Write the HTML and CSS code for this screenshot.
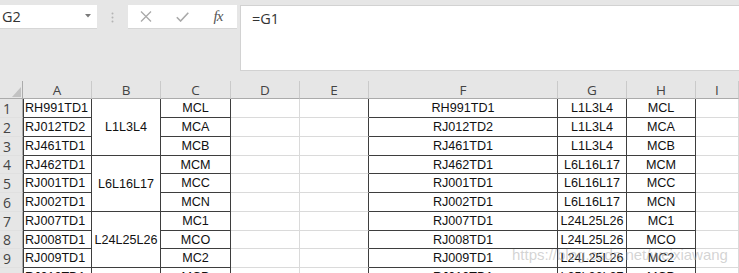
FILE: index.html
```html
<!DOCTYPE html>
<html lang="zh-CN">
  <head>
    <meta charset="UTF-8" />
    <title>Sheet1</title>
    <link rel="stylesheet" href="styles.css">
  </head>
  <body>
    <!-- 名称框 + 编辑栏 -->
    <div class="toolbar">
      <div class="namebox">
        <span>G2</span>
        <svg class="caret" width="6" height="4" viewBox="0 0 6 4"><path d="M0 0h6L3 3.5z" fill="#7a7a7a"/></svg>
      </div>
      <div class="grip">
        <svg width="3" height="11" viewBox="0 0 3 11"><circle cx="1.5" cy="1.5" r="1" fill="#b4b4b4"/><circle cx="1.5" cy="5.5" r="1" fill="#b4b4b4"/><circle cx="1.5" cy="9.5" r="1" fill="#b4b4b4"/></svg>
      </div>
      <div class="fnbtns">
        <span class="btn">
          <svg width="12" height="11" viewBox="0 0 12 11"><path d="M1 0.5L11 10.5M11 0.5L1 10.5" stroke="#a9a9a9" stroke-width="1.3" fill="none"/></svg>
        </span>
        <span class="btn">
          <svg width="13" height="10" viewBox="0 0 13 10"><path d="M0.8 5.2L4.6 9L12.3 0.8" stroke="#a9a9a9" stroke-width="1.6" fill="none"/></svg>
        </span>
        <span class="btn fx">fx</span>
      </div>
      <div class="formula">=G1</div>
    </div>

    <!-- 工作表 -->
    <div class="sheet">
      <div class="hd corner">
        <svg width="9" height="10" viewBox="0 0 9 10"><path d="M9 0V10H0z" fill="#c2c2c2"/></svg>
      </div>
      <div class="hd">A</div>
      <div class="hd">B</div>
      <div class="hd">C</div>
      <div class="hd">D</div>
      <div class="hd">E</div>
      <div class="hd">F</div>
      <div class="hd">G</div>
      <div class="hd">H</div>
      <div class="hd">I</div>

      <div class="rh">1</div>
      <div class="c k l first">RH991TD1</div>
      <div class="c k merge">L1L3L4</div>
      <div class="c k">MCL</div>
      <div class="c"></div>
      <div class="c er"></div>
      <div class="c k">RH991TD1</div>
      <div class="c k">L1L3L4</div>
      <div class="c k">MCL</div>
      <div class="c"></div>

      <div class="rh">2</div>
      <div class="c k l first">RJ012TD2</div>
      <div class="c k">MCA</div>
      <div class="c"></div>
      <div class="c er"></div>
      <div class="c k">RJ012TD2</div>
      <div class="c k">L1L3L4</div>
      <div class="c k">MCA</div>
      <div class="c"></div>

      <div class="rh">3</div>
      <div class="c k l first">RJ461TD1</div>
      <div class="c k">MCB</div>
      <div class="c"></div>
      <div class="c er"></div>
      <div class="c k">RJ461TD1</div>
      <div class="c k">L1L3L4</div>
      <div class="c k">MCB</div>
      <div class="c"></div>

      <div class="rh">4</div>
      <div class="c k l first">RJ462TD1</div>
      <div class="c k merge">L6L16L17</div>
      <div class="c k">MCM</div>
      <div class="c"></div>
      <div class="c er"></div>
      <div class="c k">RJ462TD1</div>
      <div class="c k">L6L16L17</div>
      <div class="c k">MCM</div>
      <div class="c"></div>

      <div class="rh">5</div>
      <div class="c k l first">RJ001TD1</div>
      <div class="c k">MCC</div>
      <div class="c"></div>
      <div class="c er"></div>
      <div class="c k">RJ001TD1</div>
      <div class="c k">L6L16L17</div>
      <div class="c k">MCC</div>
      <div class="c"></div>

      <div class="rh">6</div>
      <div class="c k l first">RJ002TD1</div>
      <div class="c k">MCN</div>
      <div class="c"></div>
      <div class="c er"></div>
      <div class="c k">RJ002TD1</div>
      <div class="c k">L6L16L17</div>
      <div class="c k">MCN</div>
      <div class="c"></div>

      <div class="rh">7</div>
      <div class="c k l first">RJ007TD1</div>
      <div class="c k merge">L24L25L26</div>
      <div class="c k">MC1</div>
      <div class="c"></div>
      <div class="c er"></div>
      <div class="c k">RJ007TD1</div>
      <div class="c k">L24L25L26</div>
      <div class="c k">MC1</div>
      <div class="c"></div>

      <div class="rh">8</div>
      <div class="c k l first">RJ008TD1</div>
      <div class="c k">MCO</div>
      <div class="c"></div>
      <div class="c er"></div>
      <div class="c k">RJ008TD1</div>
      <div class="c k">L24L25L26</div>
      <div class="c k">MCO</div>
      <div class="c"></div>

      <div class="rh">9</div>
      <div class="c k l first">RJ009TD1</div>
      <div class="c k">MC2</div>
      <div class="c"></div>
      <div class="c er"></div>
      <div class="c k">RJ009TD1</div>
      <div class="c k">L24L25L26</div>
      <div class="c k">MC2</div>
      <div class="c"></div>

      <div class="rh">10</div>
      <div class="c k l first">RJ010TD1</div>
      <div class="c k merge">L25L26L27</div>
      <div class="c k">MCP</div>
      <div class="c"></div>
      <div class="c er"></div>
      <div class="c k">RJ010TD1</div>
      <div class="c k">L25L26L27</div>
      <div class="c k">MCP</div>
      <div class="c"></div>
    </div>

    <span class="watermark">https://blog.csdn.net/weixiawang</span>
  </body>
</html>
```

FILE: styles.css
```css
* {
  box-sizing: border-box;
  margin: 0;
  padding: 0;
}
body {
  position: relative;
  width: 739px;
  height: 273px;
  overflow: hidden;
  background-color: #e6e6e6;
  font-family: "Liberation Sans", Arial, sans-serif;
}

/* 编辑栏 */
.toolbar {
  display: flex;
  align-items: flex-start;
  height: 81px;
  padding-top: 5px;
}
.namebox {
  display: flex;
  align-items: center;
  justify-content: space-between;
  width: 97px;
  height: 24px;
  padding: 0 6px 0 2px;
  background-color: #fff;
  border-bottom: 1px solid #d6d6d6;
  font: 14.5px "Open Sans", sans-serif;
  color: #333;
}
.caret {
  margin-top: -1px;
}
.grip {
  display: flex;
  justify-content: center;
  width: 31px;
  padding-top: 7px;
}
.fnbtns {
  display: flex;
  align-items: center;
  width: 109px;
  height: 24px;
  background-color: #fff;
  border-bottom: 1px solid #d6d6d6;
}
.btn {
  display: flex;
  justify-content: center;
  width: 36px;
}
.fx {
  font: italic 15px "Liberation Serif", serif;
  color: #555;
  letter-spacing: -1px;
}
.formula {
  flex: 1;
  height: 66px;
  margin-left: 3px;
  padding: 3px 0 0 11px;
  background-color: #fff;
  border: 1px solid #d2d2d2;
  border-right: none;
  font: 14.5px "Open Sans", sans-serif;
  color: #333;
}

/* 工作表 */
.sheet {
  display: grid;
  grid-template-columns: 23px 69px 69px 70px 69px 69px 189px 69px 69px 1fr;
  grid-template-rows: 18px 19px 19px 19px 18px 19px 19px 19px 18px 19px 19px 19px 19px;
}
.hd {
  display: flex;
  align-items: center;
  justify-content: center;
  background-color: #e6e6e6;
  border-right: 1px solid #cacaca;
  border-bottom: 1px solid #ababab;
  font: 13.5px "Open Sans", sans-serif;
  color: #444;
}
.corner {
  align-items: flex-end;
  justify-content: flex-end;
  padding: 0 1px 1px 0;
  border-right-color: #ababab;
}
.rh {
  display: flex;
  align-items: center;
  padding-left: 3px;
  background-color: #e6e6e6;
  border-right: 1px solid #ababab;
  border-bottom: 1px solid #e0e0e0;
  font: 14px "Open Sans", sans-serif;
  color: #444;
}
.c {
  display: flex;
  align-items: center;
  justify-content: center;
  overflow: hidden;
  white-space: nowrap;
  background-color: #fff;
  border-right: 1px solid #dadada;
  border-bottom: 1px solid #dadada;
  font-size: 12.6px;
  color: #111;
}
.k {
  border-right-color: #3e3e3e;
  border-bottom-color: #3e3e3e;
}
.er {
  border-right-color: #3e3e3e;
}
.l {
  justify-content: flex-start;
  padding-left: 2px;
}
.first {
  box-shadow: inset 1px 0 0 #3e3e3e;
}
.merge {
  grid-row: span 3;
}

.watermark {
  position: absolute;
  left: 512px;
  top: 246px;
  font-size: 15px;
  color: rgba(175, 175, 175, 0.55);
  white-space: nowrap;
}
```
